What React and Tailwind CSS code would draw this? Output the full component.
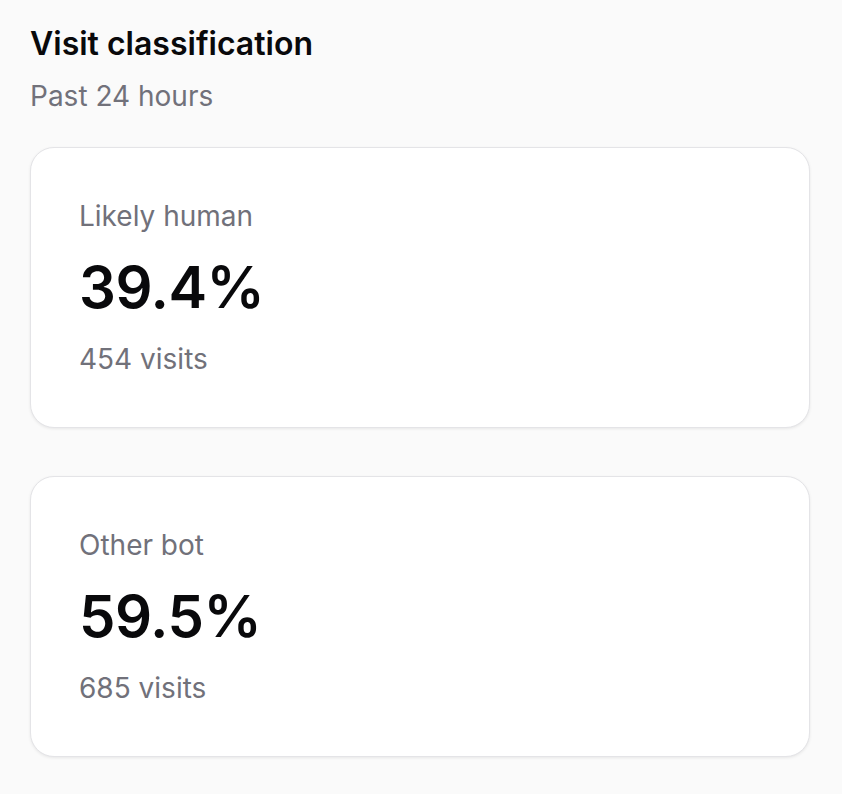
import React from "react";

function StatCard({ label, value, visits }) {
  return (
    <div className="rounded-[24px] border border-[#e4e4e7] bg-white px-[48px] pt-[48px] pb-[48px] shadow-[0_1px_3px_rgba(0,0,0,0.08)]">
      <div className="text-[28px] leading-[40px] text-[#71717a]">{label}</div>
      <div className="mt-[21px] text-[58px] leading-[60px] font-semibold tracking-[-0.5px] text-[#09090b]">{value}</div>
      <div className="mt-[22px] text-[28px] leading-[40px] text-[#71717a]">{visits}</div>
    </div>
  );
}

export default function App() {
  return (
    <div
      className="min-h-[794px] w-full bg-[#fafafa] pl-[30px] pr-[32px] pt-[24px] pb-[38px]"
      style={{ fontFamily: "Inter, 'Noto Sans', sans-serif" }}
    >
      <h1 className="text-[32px] leading-[40px] font-semibold text-[#09090b]">Visit classification</h1>
      <p className="mt-[12px] text-[28px] leading-[40px] text-[#71717a]">Past 24 hours</p>
      <div className="mt-[31px] flex flex-col gap-[48px]">
        <StatCard label="Likely human" value="39.4%" visits="454 visits" />
        <StatCard label="Other bot" value="59.5%" visits="685 visits" />
      </div>
    </div>
  );
}
